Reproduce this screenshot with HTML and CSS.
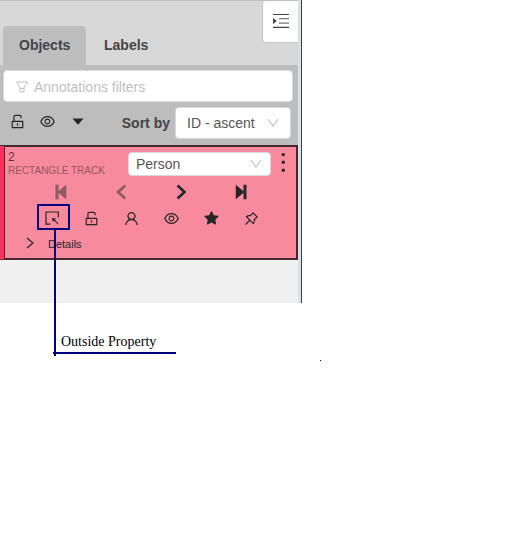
FILE: index.html
```html
<!DOCTYPE html>
<html lang="en">
<head>
<meta charset="utf-8">
<title>Objects</title>
<link rel="stylesheet" href="styles.css">
</head>
<body>
<svg class="defs" width="0" height="0">
<symbol id="unlock" viewBox="0 0 1024 1024"><path d="M832 464H332V240c0-30.900 25.100-56 56-56h248c30.900 0 56 25.100 56 56v68c0 4.400 3.600 8 8 8h56c4.400 0 8-3.600 8-8v-68c0-70.700-57.300-128-128-128H388c-70.700 0-128 57.300-128 128v224h-68c-17.700 0-32 14.300-32 32v384c0 17.700 14.300 32 32 32h640c17.700 0 32-14.300 32-32V496c0-17.700-14.300-32-32-32zm-40 376H232V536h560v304zM484 701v53c0 4.400 3.600 8 8 8h40c4.400 0 8-3.600 8-8v-53a48 48 0 1 0-56 0z"/></symbol>
<symbol id="eye" viewBox="0 0 1024 1024"><path d="M942.2 486.2C847.4 286.5 704.1 186 512 186c-192.2 0-335.4 100.500-430.2 300.300a60.300 60.300 0 0 0 0 51.500C176.600 737.500 319.900 838 512 838c192.200 0 335.400-100.500 430.200-300.300 7.700-16.200 7.700-35 0-51.500zM512 766c-161.300 0-279.400-81.800-362.700-254C232.600 339.800 350.700 258 512 258c161.300 0 279.400 81.800 362.700 254C791.500 684.200 673.400 766 512 766zm-4-430c-97.200 0-176 78.800-176 176s78.800 176 176 176 176-78.800 176-176-78.800-176-176-176zm0 288c-61.900 0-112-50.100-112-112s50.100-112 112-112 112 50.100 112 112-50.100 112-112 112z"/></symbol>
</svg>
<main class="panel">
  <div class="sidebar">
    <header class="tabs">
      <div class="tab active">Objects</div>
      <div class="tab">Labels</div>
      <div class="fold"><svg width="18" height="16" viewBox="0 0 18 16"><path d="M1 2.500h16M1 15.300h16" stroke="#444" stroke-width="1.200"/><path d="M7 6.600h10M7 11.200h10" stroke="#777" stroke-width="1.300"/><path d="M1 6l3.800 3L1 12z" fill="#444"/></svg></div>
    </header>
    <section class="tools">
      <div class="filter"><svg width="12" height="12" viewBox="0 0 12 12" fill="none" stroke="#bfbfbf"><path d="M.7 1h10.600L8 6.700v4.300H4V6.700zM4 7.500h4"/></svg><span>Annotations filters</span></div>
      <div class="sort-row">
        <svg class="icon"><use href="#unlock"/></svg>
        <svg class="icon eye"><use href="#eye"/></svg>
        <svg class="caret" width="12" height="7" viewBox="0 0 12 7"><path d="M.5.500h11L6 6.800z"/></svg>
        <b>Sort by</b>
        <div class="select sort"><span>ID - ascent</span><svg class="chev" width="12" height="10" viewBox="0 0 12 10"><path d="M1 1l5 7 5-7"/></svg></div>
      </div>
    </section>
    <article class="item">
      <div class="card">
        <div class="item-head">
          <div class="ident"><div class="num">2</div><div class="kind">RECTANGLE TRACK</div></div>
          <div class="select person"><span>Person</span><svg class="chev" width="12" height="10" viewBox="0 0 12 10"><path d="M1 1l5 7 5-7"/></svg></div>
          <svg class="more" width="4" height="20" viewBox="0 0 4 20"><circle cx="2.300" cy="2.600" r="1.700"/><circle cx="2.300" cy="10.300" r="1.700"/><circle cx="2.300" cy="18.200" r="1.700"/></svg>
        </div>
        <div class="nav">
          <svg class="dim" viewBox="0 0 16 16"><path d="M2.500.7h3v6.500L13.200.700v14.600L5.500 8.800v6.500h-3z"/></svg>
          <svg class="dim" viewBox="0 0 16 16"><path class="line" d="M12.200 1.500L5.200 8l7 6.500"/></svg>
          <svg viewBox="0 0 16 16"><path class="line" d="M4.500 1.500l7 6.500-7 6.500"/></svg>
          <svg viewBox="0 0 16 16"><path d="M13.500.700h-3v6.500L2.800.7v14.600l7.700-6.500v6.500h3z"/></svg>
        </div>
        <div class="actions">
          <svg class="outside" viewBox="0 0 14 14"><path d="M5.500 13.200H1V1h12.300v5.500" fill="none" stroke="#262626" stroke-width="1.200"/><path d="M7 7l4 .5-1.100 1.200 3.800 4.200-.8.700-3.900-4.100L7.600 11z"/></svg>
          <svg class="icon"><use href="#unlock"/></svg>
          <svg class="icon" viewBox="0 0 1024 1024"><path d="M858.5 763.6a374 374 0 0 0-80.600-119.500 375.600 375.600 0 0 0-119.500-80.600c-.4-.2-.8-.3-1.200-.5C719.500 518 760 444.700 760 362c0-137-111-248-248-248S264 225 264 362c0 82.700 40.500 156 102.800 201.100-.4.200-.8.300-1.200.5-44.800 18.900-85 46-119.500 80.600a375.600 375.600 0 0 0-80.600 119.500A371.700 371.700 0 0 0 136 901.800a8 8 0 0 0 8 8.200h60c4.400 0 7.900-3.500 8-7.800 2-77.200 33-149.500 87.800-204.300 56.700-56.700 132-87.900 212.200-87.900s155.500 31.200 212.200 87.900C779 752.700 810 825 812 902.200c.1 4.400 3.600 7.800 8 7.800h60a8 8 0 0 0 8-8.200c-1-47.800-10.900-94.300-29.500-138.200zM512 534c-45.900 0-89.100-17.900-121.600-50.400S340 407.900 340 362c0-45.900 17.900-89.100 50.400-121.600S466.100 190 512 190s89.100 17.900 121.600 50.400S684 316.100 684 362c0 45.900-17.900 89.100-50.400 121.600S557.900 534 512 534z"/></svg>
          <svg class="icon"><use href="#eye"/></svg>
          <svg class="icon" viewBox="0 0 1024 1024"><path d="M908.1 353.1l-253.900-36.900L540.700 86.100c-3.100-6.300-8.200-11.400-14.500-14.500-15.800-7.800-35-1.300-42.900 14.500L369.800 316.200l-253.900 36.900c-7 1-13.400 4.300-18.300 9.300a32 32 0 0 0 .6 45.300l183.700 179.100-43.400 252.900a32 32 0 0 0 46.400 33.700L512 754l227.100 119.400c6.200 3.300 13.400 4.400 20.300 3.200 17.400-3 29.100-19.500 26.100-36.900l-43.400-252.900 183.700-179.100c5-4.900 8.300-11.300 9.300-18.300 2.700-17.500-9.500-33.700-27-36.300z"/></svg>
          <svg class="icon" viewBox="0 0 1024 1024"><path d="M878.3 392.1L631.900 145.700c-6.500-6.500-15-9.700-23.500-9.700s-17 3.200-23.500 9.700L423.800 306.900c-12.200-1.400-24.500-2-36.800-2-73.200 0-146.400 24.100-206.500 72.300-15.400 12.300-16.600 35.400-2.700 49.400l181.700 181.700-215.400 215.200a15.800 15.800 0 0 0-4.600 9.800l-3.400 37.200c-.9 9.400 6.600 17.400 15.900 17.400.5 0 1 0 1.500-.1l37.200-3.400c3.700-.3 7.200-2 9.800-4.600l215.400-215.400 181.700 181.700c6.500 6.500 15 9.700 23.500 9.700 9.700 0 19.300-4.200 25.900-12.400 56.300-70.300 79.700-158.300 70.200-243.400l161.100-161.100c12.900-12.800 12.900-33.800 0-46.800zM666.200 549.3l-24.500 24.500 3.800 34.400a259.900 259.900 0 0 1-30.400 153.900L262 408.800c12.900-7.100 26.300-13.100 40.300-17.900 27.200-9.400 55.700-14.100 84.700-14.100 9.600 0 19.300.5 28.900 1.600l34.400 3.800 24.500-24.500L608.500 224 800 415.500 666.200 549.300z"/></svg>
        </div>
        <div class="details"><svg width="8" height="12" viewBox="0 0 8 12"><path d="M1 1l6 5-6 5"/></svg><span>Details</span></div>
      </div>
    </article>
  </div>
</main>
<div class="mark-box"></div>
<div class="mark-stem"></div>
<div class="mark-label">Outside Property</div>
<div class="dot"></div>
</body>
</html>
```
FILE: styles.css
```css
* { box-sizing: border-box; }
body { margin: 0; height: 555px; position: relative; overflow: hidden; background: #fff; font-family: "Liberation Sans", Arial, sans-serif; font-size: 14px; color: #444; }
svg { display: block; flex: none; }
.defs { position: absolute; }
.panel { width: 302px; height: 303px; border-right: 1px solid #3b3f49; padding-right: 3px; background: #dbe0e6; }
.sidebar { height: 303px; background: #f0f0f0; }
.tabs { height: 65px; background: #d8d8d8; border-top: 1px solid #bdbdbd; display: flex; align-items: flex-end; padding-left: 3px; gap: 2px; }
.tab { height: 39px; padding: 0 16px; line-height: 39px; font-weight: 700; font-size: 14px; border-radius: 4px 4px 0 0; }
.tab.active { width: 83px; background: #bdbdbd; }
.fold { width: 36px; height: 42px; margin-left: auto; align-self: flex-start; background: #fff; border: 1px solid #c6c6c6; border-width: 0 0 1px 1px; border-radius: 4px 0 0 4px; padding: 11px 0 0 9px; }
.tools { height: 80px; background: #bdbdbd; padding: 5px 5px 0 3px; }
.filter { height: 32px; background: #fff; border: 1px solid #d9d9d9; border-radius: 4px; display: flex; align-items: center; gap: 6px; padding: 2px 0 0 12px; color: #bfbfbf; font-size: 14px; }
.sort-row { display: flex; align-items: center; height: 32px; margin: 5px 2px 0 6px; }
.icon { width: 17px; height: 17px; fill: #262626; }
.sort-row .icon { margin-bottom: 4px; }
.sort-row .eye { margin-left: 13px; }
.caret { margin: 0 0 4px 16px; fill: #262626; }
.sort-row b { margin-left: auto; margin-right: 5px; font-size: 14px; }
.select { background: #fff; border: 1px solid #d9d9d9; border-radius: 4px; display: flex; align-items: center; justify-content: space-between; font-size: 14px; color: #555; }
.sort { width: 116px; height: 32px; padding: 0 11px; }
.chev { fill: none; stroke: #bfbfbf; stroke-width: 1.100; }
.item { height: 115px; background: #ff3359; border-top: 1px solid #452a31; border-bottom: 1px solid #8c2940; padding-left: 4px; }
.card { height: 114px; background: #f78b9d; border: 2px solid #452a31; border-top-width: 1px; border-left-width: 1px; }
.item-head { display: flex; height: 33px; padding: 5px 10px 0 3px; }
.ident { width: 120px; }
.num { font-size: 12px; line-height: 11px; color: #623740; }
.kind { font-size: 10px; line-height: 15px; color: #945561; white-space: nowrap; }
.person { width: 143px; height: 24px; padding: 0 8px 0 7px; }
.more { margin: 0 0 0 10px; fill: #262626; }
.nav { display: flex; height: 24px; gap: 44px; padding: 4px 0 0 48px; }
.nav svg { width: 16px; height: 16px; fill: #262626; }
.nav .dim { opacity: .5; }
.line { fill: none; stroke: #262626; stroke-width: 2.600; }
.actions { display: grid; grid-template-columns: repeat(6, 40px); justify-items: center; align-items: center; height: 28px; padding-left: 26px; }
.outside { width: 14px; height: 14px; fill: #262626; margin-left: 1px; }
.details { display: flex; align-items: center; height: 24px; padding-left: 21px; gap: 14px; color: #262626; font-size: 11px; }
.details svg { margin-bottom: 2px; }
.details path { fill: none; stroke: #262626; stroke-width: 1.200; }
.mark-box { position: absolute; left: 37px; top: 204px; width: 33px; height: 26px; border: 2px solid #000080; }
.mark-stem { position: absolute; left: 54px; top: 229px; width: 2px; height: 127px; background: #000080; }
.mark-label { position: absolute; left: 53px; top: 330px; width: 123px; height: 24px; padding-left: 8px; line-height: 23px; border-bottom: 2px solid #000080; font-family: "Liberation Serif", serif; font-size: 14px; color: #000; white-space: nowrap; }
.dot { position: absolute; left: 320px; top: 360px; width: 1px; height: 1px; background: #000; }
```
